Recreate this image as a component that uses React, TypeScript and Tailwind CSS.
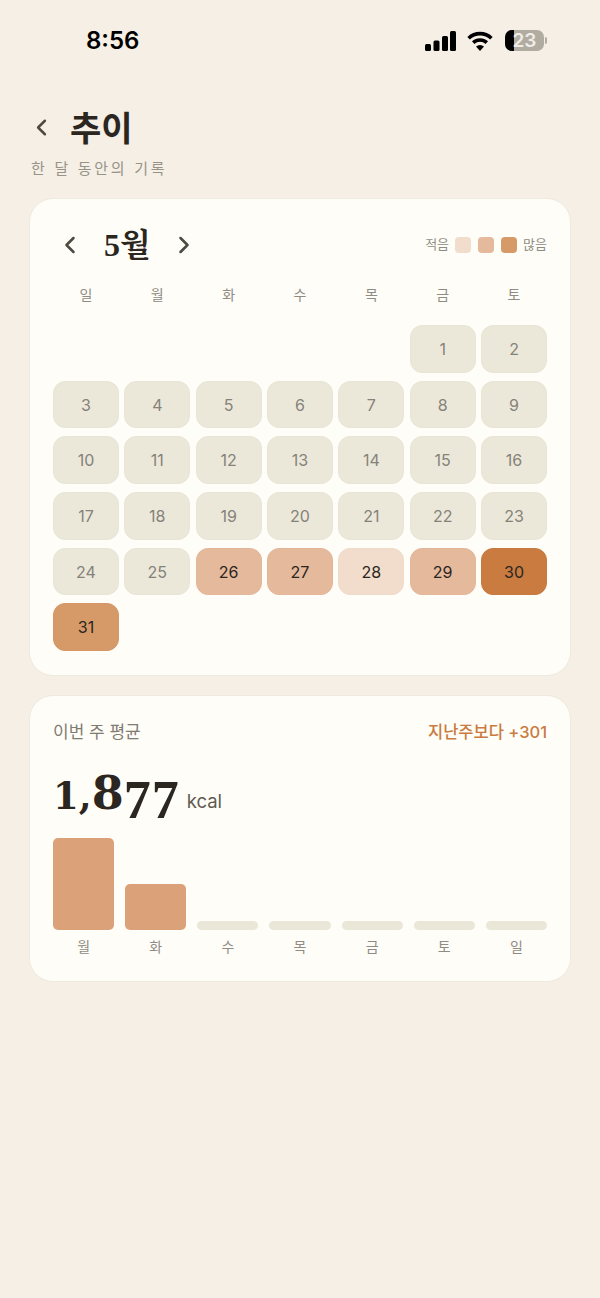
import { ChevronLeft, ChevronRight } from 'lucide-react';

type Level = 0 | 1 | 2 | 3 | 4;

const weekHeader = ['일', '월', '화', '수', '목', '금', '토'];
const barDays = ['월', '화', '수', '목', '금', '토', '일'];

// calories bucket per day of the month, anything missing stays empty
const dayLevels: Record<number, Level> = { 26: 2, 27: 2, 28: 1, 29: 2, 30: 4, 31: 3 };

const levelClass: Record<Level, string> = {
  0: 'bg-[#ece8d9] border-[#e9e5d6] text-[#85827a]',
  1: 'bg-[#f2dccb] border-[#f0dac8] text-[#2b2620]',
  2: 'bg-[#e5b99b] border-[#e3b698] text-[#2b2620]',
  3: 'bg-[#d69a69] border-[#d49765] text-[#2b2620]',
  4: 'bg-[#c97b40] border-[#c7793e] text-[#2b2620]',
};

const bars = [
  { day: '월', height: 'h-[92px]', color: 'bg-[#dba279]' },
  { day: '화', height: 'h-[46px]', color: 'bg-[#dba279]' },
  { day: '수', height: 'h-[9px]', color: 'bg-[#ebe7d8]' },
  { day: '목', height: 'h-[9px]', color: 'bg-[#ebe7d8]' },
  { day: '금', height: 'h-[9px]', color: 'bg-[#ebe7d8]' },
  { day: '토', height: 'h-[9px]', color: 'bg-[#ebe7d8]' },
  { day: '일', height: 'h-[9px]', color: 'bg-[#ebe7d8]' },
];

const sans = "font-['Inter','Noto_Sans_CJK_KR',sans-serif]";

function StatusBar() {
  return (
    <div className="flex h-[97px] items-start justify-between pl-[86px] pr-[53px] pt-[26px]">
      <span className={`${sans} text-[24px] font-semibold leading-[30px] text-black`}>8:56</span>
      <div className="flex items-center pt-[4px]">
        <svg width="31" height="20" viewBox="0 0 31 20" fill="#000">
          <rect x="0" y="13" width="6" height="7" rx="1.5" />
          <rect x="8.5" y="9.5" width="6" height="10.5" rx="1.5" />
          <rect x="17" y="5" width="6" height="15" rx="1.5" />
          <rect x="25" y="0" width="6" height="20" rx="1.5" />
        </svg>
        <svg className="ml-[11px]" width="26" height="20" viewBox="0 0 26 20" fill="none" stroke="#000" strokeWidth="3.6">
          <path d="M1.6 7.2a16.6 16.6 0 0 1 22.8 0" />
          <path d="M6.2 11.6a10 10 0 0 1 13.6 0" />
          <path d="M13 20l-4-4.4a5.6 5.6 0 0 1 8 0z" fill="#000" stroke="none" />
        </svg>
        <div className="relative ml-[12px] flex h-[21px] w-[39px] items-center justify-center overflow-hidden rounded-[7px] bg-[#b0aca2]">
          <div className="absolute inset-y-0 left-0 w-[9px] bg-black" />
          <span className={`${sans} relative text-[19px] font-semibold leading-none text-[#f0ede6]`}>23</span>
        </div>
        <div className="ml-[1px] h-[7px] w-[2px] rounded-r-full bg-[#b0aca2]" />
      </div>
    </div>
  );
}

function Header() {
  return (
    <div className="px-[31px]">
      <div className="flex h-[60px] items-center gap-[15px]">
        <ChevronLeft className="-ml-[3px] h-[27px] w-[27px] text-[#4f4a40]" strokeWidth={2.2} />
        <h1 className="font-['Noto_Sans_CJK_KR',serif] text-[34px] font-bold leading-none text-[#2b2620]">추이</h1>
      </div>
      <p className={`${sans} mt-[2px] text-[15px] leading-[20px] tracking-[0.18em] text-[#979388]`}>
        한 달 동안의 기록
      </p>
    </div>
  );
}

function CalendarCard() {
  const cells: (number | null)[] = [
    ...Array.from({ length: 5 }, () => null),
    ...Array.from({ length: 31 }, (_, i) => i + 1),
  ];

  return (
    <section className="rounded-[24px] border border-[#eeeadf] bg-[#fffdf8] px-[23px] pb-[24px] pt-[26px]">
      <div className="flex h-[40px] items-center justify-between">
        <div className="flex items-center">
          <ChevronLeft className="ml-[3px] h-[28px] w-[28px] text-[#4f4a40]" strokeWidth={2.2} />
          <span className="ml-[20px] w-[60px] font-['Liberation_Serif','Noto_Serif_CJK_KR','Noto_Sans_CJK_KR',serif] text-[32px] font-bold leading-none text-[#2b2620]">
            5월
          </span>
          <ChevronRight className="ml-[6px] h-[28px] w-[28px] text-[#4f4a40]" strokeWidth={2.2} />
        </div>
        <div className={`${sans} flex items-center gap-[6px] text-[13px] text-[#8f8c84]`}>
          <span>적음</span>
          <span className="h-[16px] w-[16px] rounded-[4px] bg-[#f2dccb]" />
          <span className="ml-[1px] h-[16px] w-[16px] rounded-[4px] bg-[#e5b99b]" />
          <span className="ml-[1px] h-[16px] w-[16px] rounded-[4px] bg-[#d69a69]" />
          <span>많음</span>
        </div>
      </div>

      <div className="mt-[20px] grid grid-cols-7 gap-x-[5.4px]">
        {weekHeader.map((d) => (
          <div key={d} className={`${sans} h-[20px] text-center text-[14px] leading-[20px] text-[#8f8c84]`}>
            {d}
          </div>
        ))}
      </div>

      <div className="mt-[20px] grid grid-cols-7 gap-x-[5.4px] gap-y-[8px]">
        {cells.map((day, i) =>
          day === null ? (
            <div key={`blank-${i}`} className="h-[47.7px]" />
          ) : (
            <div
              key={day}
              className={`${sans} flex h-[47.7px] items-center justify-center rounded-[12px] border text-[16px] ${levelClass[dayLevels[day] ?? 0]}`}
            >
              {day}
            </div>
          ),
        )}
      </div>
    </section>
  );
}

function WeeklyCard() {
  return (
    <section className="mt-[19px] rounded-[24px] border border-[#eeeadf] bg-[#fffdf8] px-[23px] pb-[24px] pt-[24px]">
      <div className={`${sans} flex items-center justify-between leading-[24px]`}>
        <span className="text-[17px] text-[#7f7c72]">이번 주 평균</span>
        <span className="text-[16.5px] font-medium text-[#c97b40]">지난주보다 +301</span>
      </div>

      {/* old-style figures: the 1 sits at x-height, the 7s hang below the baseline */}
      <div className="mt-[17px] flex h-[60px] items-baseline text-[#2b2620]">
        <span className="font-['DejaVu_Serif',serif] text-[46px] font-bold leading-[60px]">
          <span className="text-[37px]">1,</span>
          <span>8</span>
          <span className="relative top-[9px] font-['Liberation_Serif',serif] text-[54px] tracking-[1px]">77</span>
        </span>
        <span className={`${sans} relative -top-[1px] ml-[7px] text-[18.5px] text-[#5f5b50]`}>kcal</span>
      </div>

      <div className="mt-[17px] grid h-[92px] grid-cols-7 items-end gap-x-[11px]">
        {bars.map((b) => (
          <div key={b.day} className={`${b.height} ${b.color} rounded-[5px]`} />
        ))}
      </div>
      <div className="mt-[7px] grid grid-cols-7 gap-x-[11px]">
        {barDays.map((d) => (
          <div key={d} className={`${sans} text-center text-[14px] leading-[20px] text-[#8f8c84]`}>
            {d}
          </div>
        ))}
      </div>
    </section>
  );
}

export default function App() {
  return (
    <div className="min-h-[1298px] w-[600px] bg-[#f5efe6]">
      <StatusBar />
      <Header />
      <main className="mt-[19px] px-[29px]">
        <CalendarCard />
        <WeeklyCard />
      </main>
    </div>
  );
}
